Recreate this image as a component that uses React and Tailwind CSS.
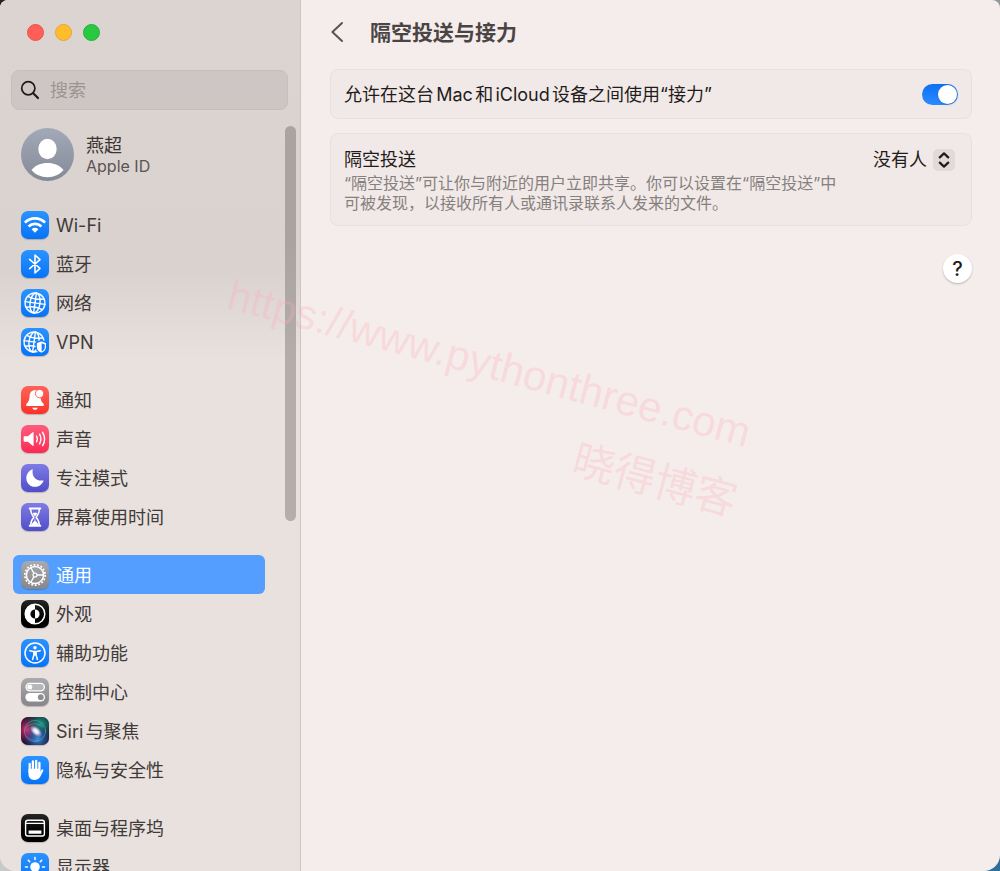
import React, { useState } from 'react';

const Tile = ({ className, children }) => (
  <span className={`block h-7 w-7 shrink-0 overflow-hidden rounded-[7px] shadow-[0_1px_1px_rgba(0,0,0,0.2)] ${className}`}>
    <svg viewBox="0 0 28 28" className="h-7 w-7" fill="none" stroke="white" strokeLinecap="round" strokeLinejoin="round" aria-hidden="true">
      {children}
    </svg>
  </span>
);

const blue = 'bg-linear-to-b from-[#2a93ff] to-[#0573f8]';
const purple = 'bg-linear-to-b from-[#7f7be6] to-[#514dc9]';
const gray = 'bg-linear-to-b from-[#aaa9ad] to-[#87868b]';
const black = 'bg-linear-to-b from-[#262626] to-[#000000]';

const WifiIcon = () => (
  <Tile className={blue}>
    <g strokeWidth="2.6" strokeLinecap="butt">
      <path d="M3.9 11.6 A14.2 14.2 0 0 1 24.1 11.6" />
      <path d="M7.6 15.5 A9 9 0 0 1 20.4 15.5" />
    </g>
    <path d="M10.6 18.2 A4.9 4.9 0 0 1 17.4 18.2 L14 21.8 Z" fill="white" stroke="none" />
  </Tile>
);

const BluetoothIcon = () => (
  <Tile className={blue}>
    <path d="M8.6 9.4 L19 18.3 L14 23 V5 L19 9.7 L8.6 18.6" strokeWidth="1.6" />
  </Tile>
);

const GlobeLines = () => (
  <g strokeWidth="1.4" transform="rotate(8 14 14)">
    <circle cx="14" cy="14" r="10" />
    <ellipse cx="14" cy="14" rx="5" ry="10" />
    <path d="M14 4 V24 M4 14 H24 M5.8 8.5 Q14 11.6 22.2 8.5 M5.8 19.5 Q14 16.4 22.2 19.5" />
  </g>
);

const NetworkIcon = () => (
  <Tile className={blue}>
    <GlobeLines />
  </Tile>
);

const VpnIcon = () => (
  <Tile className={blue}>
    <g transform="translate(-1 0)">
      <GlobeLines />
    </g>
    <path d="M20.4 12.6 L25.6 14.6 V18.8 C25.6 22.1 23.6 24.2 20.4 25.4 C17.2 24.2 15.2 22.1 15.2 18.8 V14.6 Z" fill="white" stroke="#0c7cfb" strokeWidth="1.2" />
    <path d="M20.6 15.2 L23.8 16.4 V19 C23.8 21.1 22.6 22.5 20.6 23.4 Z" fill="#1580fb" stroke="none" />
  </Tile>
);

const BellIcon = () => (
  <Tile className="bg-linear-to-b from-[#ff6258] to-[#fb3027]">
    <path d="M14 4.3 C10.3 4.3 8.7 7 8.5 10.4 C8.3 14 7.8 15.3 5.5 17.8 C4.6 18.9 5 19.9 6.3 19.9 H21.7 C23 19.9 23.4 18.9 22.5 17.8 C20.2 15.3 19.7 14 19.5 10.4 C19.3 7 17.7 4.3 14 4.3 Z" fill="white" stroke="none" />
    <path d="M11.2 21.8 H16.8 A2.9 2.9 0 0 1 11.2 21.8 Z" fill="white" stroke="none" />
    <circle cx="18.6" cy="7.6" r="4.2" fill="white" stroke="#ff5a50" strokeWidth="0.9" />
  </Tile>
);

const SoundIcon = () => (
  <Tile className="bg-linear-to-b from-[#ff5a7c] to-[#fb2753]">
    <path d="M3.4 11.2 H7 L11.6 7.2 Q12.6 6.5 12.6 7.8 V20.2 Q12.6 21.5 11.6 20.8 L7 16.8 H3.4 Q2.6 16.8 2.6 16 V12 Q2.6 11.2 3.4 11.2 Z" fill="white" stroke="none" />
    <path d="M15.6 11.2 Q17.2 14 15.6 16.8 M18.6 9.2 Q21.2 14 18.6 18.8 M21.6 7.3 Q25.6 14 21.6 20.7" strokeWidth="1.4" />
  </Tile>
);

const MoonIcon = () => (
  <Tile className={purple}>
    <path d="M11.8 5.2 C10.3 12.4 15.2 17.8 22.6 16.4 C21.2 20.4 17.8 22.8 14 22.8 C9.1 22.8 5.3 19 5.3 14.2 C5.3 10 7.9 6.5 11.8 5.2 Z" fill="white" stroke="none" />
  </Tile>
);

const HourglassIcon = () => (
  <Tile className={purple}>
    <path d="M8.7 5.4 H19.3 M8.7 22.8 H19.3" strokeWidth="2" />
    <path d="M9.6 6 C9.6 10.5 10.8 11.8 12.9 14.2 C10.8 16.6 9.6 18 9.6 22.4 H18.4 C18.4 18 17.2 16.6 15.1 14.2 C17.2 11.8 18.4 10.5 18.4 6" strokeWidth="1.4" />
    <path d="M11.6 9.8 H16.4 C16 11.2 15 12.2 14 13.4 C13 12.2 12 11.2 11.6 9.8 Z M14 14 L14.5 18 C16 18.8 17 20.3 17.4 22.2 H10.6 C11 20.3 12 18.8 13.5 18 Z" fill="white" stroke="none" />
  </Tile>
);

const GearIcon = () => (
  <Tile className={gray}>
    <circle cx="14" cy="14" r="10.2" strokeWidth="1.7" strokeDasharray="1.9 1.66" strokeLinecap="butt" />
    <circle cx="14" cy="14" r="8.6" strokeWidth="1.5" />
    <circle cx="14" cy="14" r="2" strokeWidth="1.2" />
    <path d="M16.2 14 H22.5 M12.9 12.1 L9.8 6.7 M12.9 15.9 L9.8 21.3" strokeWidth="1.3" />
  </Tile>
);

const AppearanceIcon = () => (
  <Tile className={black}>
    <circle cx="14" cy="14" r="9.8" strokeWidth="1.5" />
    <path d="M14 4.2 A9.8 9.8 0 0 0 14 23.8 V18.6 A4.6 4.6 0 0 1 14 9.4 Z" fill="white" stroke="none" />
    <path d="M14 9.4 A4.6 4.6 0 0 1 14 18.6 Z" fill="white" stroke="none" />
  </Tile>
);

const AccessibilityIcon = () => (
  <Tile className={blue}>
    <circle cx="14" cy="14" r="10" strokeWidth="1.5" />
    <circle cx="14" cy="8.7" r="1.8" fill="white" stroke="none" />
    <path d="M8.8 11.7 L12.6 12.4 H15.4 L19.2 11.7 M13 12.6 V15.5 L11.6 20.5 M15 12.6 V15.5 L16.4 20.5" strokeWidth="1.5" />
    <path d="M12.5 12 H15.5 V16.5 H12.5 Z" fill="white" stroke="none" />
  </Tile>
);

const ControlCenterIcon = () => (
  <Tile className={gray}>
    <rect x="5" y="5.3" width="18.4" height="7.6" rx="3.8" fill="white" fillOpacity="0.25" strokeWidth="1.3" />
    <circle cx="8.8" cy="9.1" r="2.5" fill="white" stroke="none" />
    <rect x="4.4" y="15" width="19.6" height="8.4" rx="4.2" fill="white" stroke="none" />
    <circle cx="19.8" cy="19.2" r="2.9" fill="#8e8d92" stroke="none" />
  </Tile>
);

const SiriIcon = () => (
  <Tile className="bg-[#1b1530]">
    <defs>
      <radialGradient id="siri-pink" cx="0.22" cy="0.45" r="0.5">
        <stop offset="0" stopColor="#e0347c" />
        <stop offset="1" stopColor="#b01458" stopOpacity="0" />
      </radialGradient>
      <radialGradient id="siri-teal" cx="0.7" cy="0.25" r="0.55">
        <stop offset="0" stopColor="#1c9c86" />
        <stop offset="1" stopColor="#0d6b5e" stopOpacity="0" />
      </radialGradient>
      <radialGradient id="siri-blue" cx="0.6" cy="0.78" r="0.5">
        <stop offset="0" stopColor="#3b8fe0" />
        <stop offset="1" stopColor="#1d58b2" stopOpacity="0" />
      </radialGradient>
      <radialGradient id="siri-glow">
        <stop offset="0" stopColor="white" />
        <stop offset="0.4" stopColor="#f6efff" stopOpacity="0.9" />
        <stop offset="1" stopColor="#c9a6e8" stopOpacity="0" />
      </radialGradient>
    </defs>
    <g stroke="none">
      <rect width="28" height="28" fill="url(#siri-pink)" />
      <rect width="28" height="28" fill="url(#siri-teal)" />
      <rect width="28" height="28" fill="url(#siri-blue)" />
      <ellipse cx="15" cy="14.2" rx="7.5" ry="4.5" transform="rotate(42 15 14.2)" fill="url(#siri-glow)" />
    </g>
    <circle cx="14" cy="14" r="10.6" stroke="#62b9b4" strokeOpacity="0.55" strokeWidth="0.9" />
    <path d="M5 10 Q13 3 22 10 M5.5 19 Q9 24 17 23.5" stroke="#7fc3cc" strokeOpacity="0.35" strokeWidth="0.9" />
  </Tile>
);

const HandIcon = () => (
  <Tile className={blue}>
    <path d="M8.7 8 V16 M11.9 5.4 V15 M15.2 4.8 V15 M18.4 6.9 V16" strokeWidth="2.3" />
    <path d="M7.5 13 V18 C7.5 21.7 9.8 23.9 13.2 23.9 C16.5 23.9 18.3 22.6 19.8 19.7 L22.2 14.9 C22.8 13.6 21.2 12.7 20.3 13.9 L19 16 L18.4 12.8 H8 Z" fill="white" stroke="none" />
  </Tile>
);

const DockIcon = () => (
  <Tile className={black}>
    <rect x="4.6" y="6.2" width="18.8" height="15.8" rx="2.2" strokeWidth="1.4" />
    <path d="M5 9.4 H23" strokeWidth="1.4" strokeLinecap="butt" />
    <path d="M7.6 16.4 H20.4 V19.8 H7.6 Z" fill="white" stroke="none" />
  </Tile>
);

const DisplayIcon = () => (
  <Tile className={blue}>
    <circle cx="14" cy="14" r="4.8" fill="white" stroke="none" />
    <path d="M14 4.5 V6.5 M14 21.5 V23.5 M4.5 14 H6.5 M21.5 14 H23.5 M7.3 7.3 L8.7 8.7 M19.3 19.3 L20.7 20.7 M20.7 7.3 L19.3 8.7 M8.7 19.3 L7.3 20.7" strokeWidth="1.6" />
  </Tile>
);

const groups = [
  [
    { label: 'Wi-Fi', Icon: WifiIcon },
    { label: '蓝牙', Icon: BluetoothIcon },
    { label: '网络', Icon: NetworkIcon },
    { label: 'VPN', Icon: VpnIcon },
  ],
  [
    { label: '通知', Icon: BellIcon },
    { label: '声音', Icon: SoundIcon },
    { label: '专注模式', Icon: MoonIcon },
    { label: '屏幕使用时间', Icon: HourglassIcon },
  ],
  [
    { label: '通用', Icon: GearIcon },
    { label: '外观', Icon: AppearanceIcon },
    { label: '辅助功能', Icon: AccessibilityIcon },
    { label: '控制中心', Icon: ControlCenterIcon },
    { label: 'Siri与聚焦', Icon: SiriIcon },
    { label: '隐私与安全性', Icon: HandIcon },
  ],
  [
    { label: '桌面与程序坞', Icon: DockIcon },
    { label: '显示器', Icon: DisplayIcon },
  ],
];

const Sidebar = ({ selected, onSelect }) => (
  <aside className="relative flex w-[301px] shrink-0 flex-col overflow-hidden border-r border-[#cdc5c2] bg-[linear-gradient(to_bottom,#dcd4d1_0px,#dad2cf_270px,#e9e1de_360px,#e9e1de_100%)]">
    {/* Window controls */}
    <div className="flex gap-[11px] pt-6 pl-[27px]">
      <button aria-label="关闭" className="h-[17px] w-[17px] rounded-full border border-[#e9524a] bg-[#ff5f57]" />
      <button aria-label="最小化" className="h-[17px] w-[17px] rounded-full border border-[#e5a72c] bg-[#febc2e]" />
      <button aria-label="缩放" className="h-[17px] w-[17px] rounded-full border border-[#24b139] bg-[#28c840]" />
    </div>

    <label className="mt-[29px] mr-3 ml-[11px] flex h-10 shrink-0 items-center gap-2.5 rounded-lg border border-[#c8bfbd] bg-[#cec6c4] pl-2">
      <svg viewBox="0 0 20 20" className="h-5 w-5 shrink-0" fill="none" stroke="#1d1b1b" strokeLinecap="round" aria-hidden="true">
        <circle cx="8.3" cy="8.3" r="6.6" strokeWidth="1.7" />
        <path d="M13.2 13.2 L18 18" strokeWidth="2.2" />
      </svg>
      <input type="text" aria-label="搜索" placeholder="搜索" className="w-full min-w-0 bg-transparent pt-0.5 text-lg outline-none placeholder:text-[#9c9492]" />
    </label>

    <button className="mt-[18px] flex shrink-0 items-center gap-3 pl-[21px] text-left">
      <svg viewBox="0 0 53 53" className="h-[53px] w-[53px]" aria-hidden="true">
        <defs>
          <linearGradient id="avatar" x1="0" y1="0" x2="0" y2="1">
            <stop offset="0" stopColor="#a2a9b7" />
            <stop offset="1" stopColor="#858a97" />
          </linearGradient>
        </defs>
        <circle cx="26.5" cy="26.5" r="26.5" fill="url(#avatar)" />
        <ellipse cx="26.5" cy="21" rx="9.2" ry="10.2" fill="white" />
        <path d="M10.5 42 C14 37.5 20 35 26.5 35 C33 35 39 37.5 42.5 42 C39 46.5 33 49.2 26.5 49.2 C20 49.2 14 46.5 10.5 42 Z" fill="white" />
      </svg>
      <span className="flex flex-col pt-px">
        <span className="text-lg leading-[22px] text-[#3a3534]">燕超</span>
        <span className="text-base leading-[18px] text-[#5b5453]">Apple ID</span>
      </span>
    </button>

    <nav className="mt-6 flex min-h-0 flex-1 flex-col gap-[19px] overflow-hidden pr-[35px] pl-[13px]">
      {groups.map((group, index) => (
        <ul key={index} className="shrink-0">
          {group.map(({ label, Icon }) => (
            <li key={label}>
              <button
                onClick={() => onSelect(label)}
                className={`flex h-[39px] w-full items-center gap-[7px] rounded-md pl-2 text-left text-lg ${
                  selected === label ? 'bg-[#549eff] text-white' : 'text-[#403b39]'
                }`}
              >
                <Icon />
                <span className="pt-0.5">{label}</span>
              </button>
            </li>
          ))}
        </ul>
      ))}
    </nav>

    {/* Scrollbar thumb */}
    <div className="absolute top-[126px] right-1 h-[395px] w-[11px] rounded-full bg-linear-to-b from-[#aba3a1] from-30% to-[#b3aeaa] to-60%" />
  </aside>
);

const App = () => {
  const [selected, setSelected] = useState('通用');
  const [handoff, setHandoff] = useState(true);

  return (
    <div className="h-screen bg-[conic-gradient(#8e9696_0deg,#8e9696_90deg,#2f6f9d_91deg,#2f6f9d_180deg,#c6cac9_181deg,#c6cac9_270deg,#222222_271deg,#222222_360deg)] font-[Inter,'Noto_Sans_CJK_SC',sans-serif] [text-autospace:normal]" lang="zh-CN">
      <div className="relative flex h-full overflow-hidden rounded-t-lg rounded-b-2xl bg-[#f5edeb]">
        <Sidebar selected={selected} onSelect={setSelected} />

        <main className="flex min-w-0 flex-1 flex-col pt-4 pr-7 pl-[29px]">
          <header className="flex h-8 items-center gap-[26px]">
            <button aria-label="返回">
              <svg viewBox="0 0 14 22" className="h-[22px] w-3.5" fill="none" stroke="#595352" strokeWidth="2" strokeLinecap="round" strokeLinejoin="round" aria-hidden="true">
                <path d="M12 2 L2.4 11 L12 20" />
              </svg>
            </button>
            <h1 className="pt-0.5 text-[21px] font-bold text-[#4a4544]">隔空投送与接力</h1>
          </header>

          <section className="mt-[21px] flex h-[50px] items-center justify-between rounded-lg border border-[#e8e0de] bg-[#f1e9e7] px-[13px]">
            <label htmlFor="handoff" className="pt-0.5 text-lg text-[#1f1c1b]">允许在这台Mac和iCloud设备之间使用“接力”</label>
            <input
              id="handoff"
              type="checkbox"
              role="switch"
              checked={handoff}
              onChange={(e) => setHandoff(e.target.checked)}
              className="flex h-[21px] w-9 appearance-none items-center rounded-full bg-[#cfc8c6] px-px before:h-[19px] before:w-[19px] before:rounded-full before:bg-white before:shadow-sm checked:justify-end checked:bg-linear-to-b checked:from-[#0a70f5] checked:to-[#2a8bff]"
            />
          </section>

          <section className="mt-3.5 flex items-start justify-between rounded-lg border border-[#e8e0de] bg-[#f1e9e7] pt-[13px] pr-4 pb-3 pl-[13px]">
            <div>
              <label htmlFor="airdrop" className="block text-lg leading-[26px] text-[#1f1c1b]">隔空投送</label>
              <p className="max-w-[504px] text-base leading-5 text-[#86807e]">
                “隔空投送”可让你与附近的用户立即共享。你可以设置在“隔空投送”中可被发现，以接收所有人或通讯录联系人发来的文件。
              </p>
            </div>
            <div className="relative flex shrink-0 items-center">
              <select id="airdrop" className="h-[26px] appearance-none bg-transparent pr-7 text-lg leading-[26px] text-[#1f1c1b] outline-none">
                <option>没有人</option>
              </select>
              <span className="pointer-events-none absolute right-0 flex h-[22px] w-[22px] items-center justify-center rounded-[5px] bg-[#e2dad8]">
                <svg viewBox="0 0 12 16" className="h-4 w-3" fill="none" stroke="#1f1c1b" strokeWidth="2.2" strokeLinecap="round" strokeLinejoin="round" aria-hidden="true">
                  <path d="M1.8 5.4 L6 1.4 L10.2 5.4 M1.8 10.6 L6 14.6 L10.2 10.6" />
                </svg>
              </span>
            </div>
          </section>

          <button aria-label="帮助" className="mt-7 flex h-[29px] w-[29px] items-center justify-center self-end rounded-full bg-white text-xl font-medium text-[#1f1c1b] shadow-[0_1px_2px_rgba(0,0,0,0.25)]">
            ?
          </button>
        </main>

        {/* Watermark laid over both panes */}
        <div className="pointer-events-none absolute inset-0 font-['Liberation_Sans','Noto_Sans_CJK_SC',sans-serif] text-[42px] leading-[48px] whitespace-nowrap text-[#ffaab9]/30">
          <span className="absolute top-[271px] left-[235px] origin-top-left rotate-15">https://www.pythonthree.com</span>
          <span className="absolute top-[436px] left-[580px] origin-top-left rotate-15">晓得博客</span>
        </div>
      </div>
    </div>
  );
};

export default App;
